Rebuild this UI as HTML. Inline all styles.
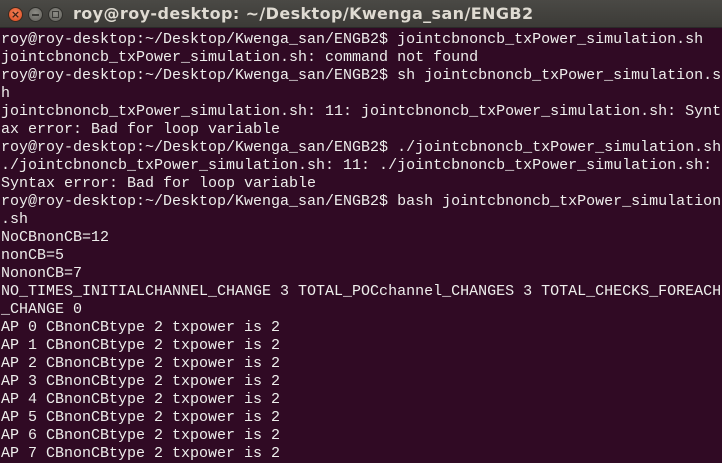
<!DOCTYPE html>
<html><head><meta charset="utf-8"><style>
html,body{margin:0;padding:0;width:722px;height:462px;overflow:hidden;background:#300a24;}
#tb{position:absolute;left:0;top:0;width:722px;height:28px;background:linear-gradient(#4a4945,#3c3b37);border-bottom:1px solid #2a2a28;box-sizing:border-box;}
.btn{position:absolute;top:7px;width:15px;height:15px;border-radius:50%;box-sizing:border-box;}
#c{left:8px;background:radial-gradient(circle at 50% 40%,#f5845a,#d9471c);border:1px solid #3a2a20;color:#3c2218;font:bold 11px/13px "DejaVu Sans",sans-serif;text-align:center;}
#m{left:28px;background:radial-gradient(circle at 50% 40%,#8e8d87,#5f5e59);border:1px solid #2f2e2b;}
#x{left:48px;background:radial-gradient(circle at 50% 40%,#8e8d87,#5f5e59);border:1px solid #2f2e2b;}
#m::after{content:"";position:absolute;left:3px;top:6px;width:7px;height:2px;background:#3a3936;}
#x::after{content:"";position:absolute;left:3px;top:3px;width:5px;height:5px;border:1px solid #3a3936;}
#title{position:absolute;left:73px;top:5px;color:#dfdbd2;font:bold 16px/18px "DejaVu Sans","Liberation Sans",sans-serif;letter-spacing:0.4px;white-space:nowrap;}
pre{position:absolute;left:1px;top:31px;margin:0;color:#eeeeec;font:15px/18px "Liberation Mono",monospace;letter-spacing:0px;}
</style></head><body>
<div id="tb"><div class="btn" id="c">×</div><div class="btn" id="m"></div><div class="btn" id="x"></div><div id="title">roy@roy-desktop: ~/Desktop/Kwenga_san/ENGB2</div></div>
<pre>roy@roy-desktop:~/Desktop/Kwenga_san/ENGB2$ jointcbnoncb_txPower_simulation.sh
jointcbnoncb_txPower_simulation.sh: command not found
roy@roy-desktop:~/Desktop/Kwenga_san/ENGB2$ sh jointcbnoncb_txPower_simulation.s
h
jointcbnoncb_txPower_simulation.sh: 11: jointcbnoncb_txPower_simulation.sh: Synt
ax error: Bad for loop variable
roy@roy-desktop:~/Desktop/Kwenga_san/ENGB2$ ./jointcbnoncb_txPower_simulation.sh
./jointcbnoncb_txPower_simulation.sh: 11: ./jointcbnoncb_txPower_simulation.sh:
Syntax error: Bad for loop variable
roy@roy-desktop:~/Desktop/Kwenga_san/ENGB2$ bash jointcbnoncb_txPower_simulation
.sh
NoCBnonCB=12
nonCB=5
NononCB=7
NO_TIMES_INITIALCHANNEL_CHANGE 3 TOTAL_POCchannel_CHANGES 3 TOTAL_CHECKS_FOREACH
_CHANGE 0
AP 0 CBnonCBtype 2 txpower is 2
AP 1 CBnonCBtype 2 txpower is 2
AP 2 CBnonCBtype 2 txpower is 2
AP 3 CBnonCBtype 2 txpower is 2
AP 4 CBnonCBtype 2 txpower is 2
AP 5 CBnonCBtype 2 txpower is 2
AP 6 CBnonCBtype 2 txpower is 2
AP 7 CBnonCBtype 2 txpower is 2</pre>
</body></html>
